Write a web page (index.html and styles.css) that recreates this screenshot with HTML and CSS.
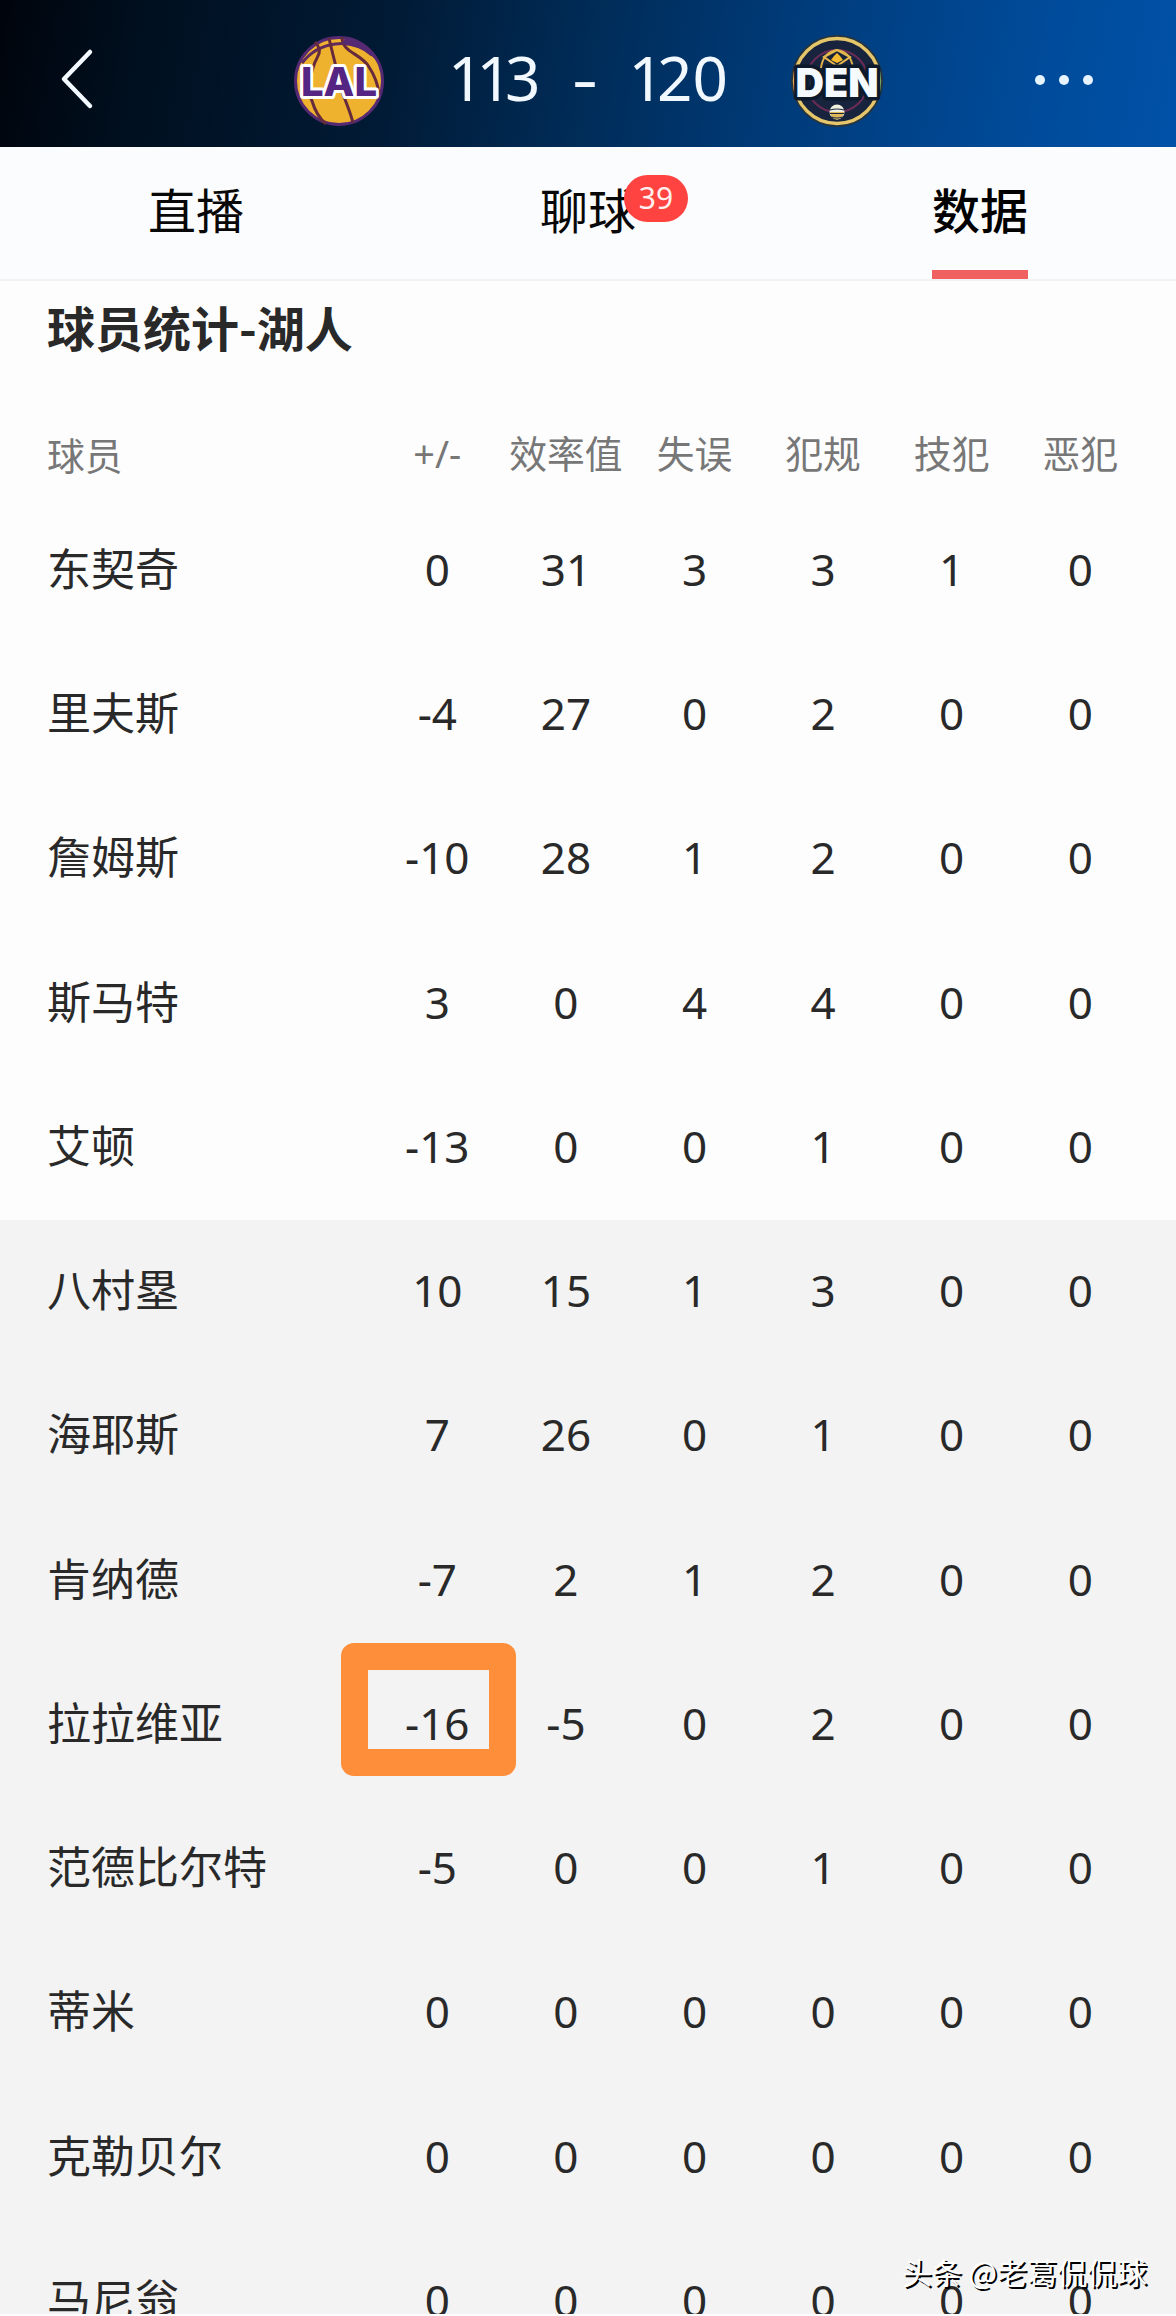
FILE: index.html
```html
<!DOCTYPE html>
<html lang="zh-CN">

<head>
    <meta charset="UTF-8">
    <meta name="viewport" content="width=device-width, initial-scale=1.0">
    <title>湖人 113 - 120 掘金</title>
    <link rel="stylesheet" href="styles.css">
</head>

<body>

    <header class="top-bar">
        <svg class="back" viewBox="0 0 40 64">
            <path d="M33 6 L7 33 L33 60" />
        </svg>

        <svg class="team-logo" viewBox="0 0 100 100">
            <circle cx="50" cy="50" r="43.5" fill="#efb22f" stroke="#552a72" stroke-width="3" />
            <g fill="none" stroke="#652b3c" stroke-width="3">
                <path d="M13 32 C30 10 62 6 83 24" stroke="#5f2b5e" />
                <path d="M26 11 C31 16 32 21 28 27 C22 38 18 60 23 70 C26 80 31 88 37 93" />
                <path d="M40 7 C44 25 50 47 54 63 C58 74 62 83 64 92" />
                <path d="M53 6 C53 22 72 22 80 36 C86 45 89 54 90 63" />
            </g>
            <path d="M56 7 C72 8 86 19 92 36 C83 22 70 15 53 13 Z" fill="#552a72" />
            <text class="logo-text lal" x="50" y="64.500" textLength="76" lengthAdjust="spacingAndGlyphs">LAL</text>
        </svg>

        <div class="score">
            <span><i>1</i><i>1</i>3</span>
            <span class="dash">-</span>
            <span><i>1</i>20</span>
        </div>

        <svg class="team-logo" viewBox="0 0 100 100">
            <circle cx="50" cy="50" r="46" fill="#26343d" />
            <circle cx="50" cy="50" r="42.5" fill="#18243d" stroke="#e6c66b" stroke-width="3.4" />
            <circle cx="50" cy="50" r="31" fill="none" stroke="#6a2c56" stroke-width="2" />
            <path d="M34 37 Q36 21 50 19 Q64 21 66 37" fill="#18243d" stroke="#d9ad4c" stroke-width="2" />
            <path d="M37 26 L50 19 L63 26 L50 35 Z" fill="#17233a" stroke="#e4b74f" stroke-width="2" />
            <path d="M44 29 L47 25 L50 22 L53 25 L56 29 L50 32 Z" fill="#f7b92f" />
            <circle cx="50" cy="81" r="7.5" fill="#f2f0df" />
            <path d="M43 81 H57 Q56 88 50 88.500 Q44 88 43 81Z" fill="#dfb75a" />
            <path d="M43 79 Q50 77 57 79 M43 82.500 H57 M44 86 Q50 88 56 86" fill="none" stroke="#1b2843" stroke-width="1.2" />
            <text class="logo-text den" x="50" y="66" textLength="83" lengthAdjust="spacingAndGlyphs">DEN</text>
        </svg>

        <svg class="more" viewBox="0 0 60 12">
            <circle cx="6" cy="6" r="5" />
            <circle cx="30" cy="6" r="5" />
            <circle cx="54" cy="6" r="5" />
        </svg>
    </header>

    <nav class="tabs">
        <a class="tab"><span>直播</span></a>
        <a class="tab"><span>聊球<b class="badge">39</b></span></a>
        <a class="tab active"><span>数据</span></a>
    </nav>

    <main class="stats">
        <h1>球员统计-湖人</h1>

        <div class="row head">
            <span>球员</span><span>+/-</span><span>效率值</span><span>失误</span><span>犯规</span><span>技犯</span><span>恶犯</span>
        </div>
        <div class="row">
            <span>东契奇</span><span>0</span><span>31</span><span>3</span><span>3</span><span>1</span><span>0</span>
        </div>
        <div class="row">
            <span>里夫斯</span><span>-4</span><span>27</span><span>0</span><span>2</span><span>0</span><span>0</span>
        </div>
        <div class="row">
            <span>詹姆斯</span><span>-10</span><span>28</span><span>1</span><span>2</span><span>0</span><span>0</span>
        </div>
        <div class="row">
            <span>斯马特</span><span>3</span><span>0</span><span>4</span><span>4</span><span>0</span><span>0</span>
        </div>
        <div class="row">
            <span>艾顿</span><span>-13</span><span>0</span><span>0</span><span>1</span><span>0</span><span>0</span>
        </div>

        <!-- bench players -->
        <div class="bench">
            <div class="row">
                <span>八村塁</span><span>10</span><span>15</span><span>1</span><span>3</span><span>0</span><span>0</span>
            </div>
            <div class="row">
                <span>海耶斯</span><span>7</span><span>26</span><span>0</span><span>1</span><span>0</span><span>0</span>
            </div>
            <div class="row">
                <span>肯纳德</span><span>-7</span><span>2</span><span>1</span><span>2</span><span>0</span><span>0</span>
            </div>
            <div class="row">
                <span>拉拉维亚</span><span class="marked">-16</span><span>-5</span><span>0</span><span>2</span><span>0</span><span>0</span>
            </div>
            <div class="row">
                <span>范德比尔特</span><span>-5</span><span>0</span><span>0</span><span>1</span><span>0</span><span>0</span>
            </div>
            <div class="row">
                <span>蒂米</span><span>0</span><span>0</span><span>0</span><span>0</span><span>0</span><span>0</span>
            </div>
            <div class="row">
                <span>克勒贝尔</span><span>0</span><span>0</span><span>0</span><span>0</span><span>0</span><span>0</span>
            </div>
            <div class="row">
                <span>马尼翁</span><span>0</span><span>0</span><span>0</span><span>0</span><span>0</span><span>0</span>
            </div>
        </div>
    </main>

    <div class="watermark">头条 @老葛侃侃球</div>
</body>

</html>
```
FILE: styles.css
```css
*,
*::after {
    margin: 0;
    padding: 0;
    box-sizing: border-box;
}

body {
    position: relative;
    width: 1176px;
    height: 2316px;
    overflow: hidden;
    display: flex;
    flex-direction: column;
    background: #fdfdfd;
    color: #292929;
    font-family: 'Noto Sans', 'Noto Sans CJK SC', sans-serif;
}

/* Score header */
.top-bar {
    flex: none;
    height: 147px;
    display: grid;
    grid-template-columns: 289px 100px 1fr 100px 289px;
    align-items: center;
    background: linear-gradient(100deg, #00040c 0%, #001020 13%, #011a35 33%, #002c58 50%, #003c7c 68%, #004a98 86%, #0051a8 100%);
}

.back {
    width: 40px;
    height: 64px;
    margin: 9px 0 0 57px;
    fill: none;
    stroke: #f4faff;
    stroke-width: 4.5;
    stroke-linecap: round;
    stroke-linejoin: round;
}

.team-logo {
    width: 100px;
    height: 100px;
    margin-top: 15px;
}

.logo-text {
    font-family: Inter, sans-serif;
    font-weight: 900;
    font-size: 40px;
    text-anchor: middle;
    paint-order: stroke;
    stroke-linejoin: round;
}

.lal {
    font-weight: 800;
    fill: #552583;
    stroke: #fff;
    stroke-width: 6;
}

.den {
    fill: #f5faff;
    stroke: #0c1a2b;
    stroke-width: 7;
}

.score {
    display: flex;
    justify-content: center;
    align-items: center;
    gap: 32px;
    margin-top: 6px;
    color: #f1f8ff;
    font-size: 62px;
    line-height: 80px;
}

.score i {
    font-style: normal;
    letter-spacing: -7px;
}

.dash {
    width: 24px;
    text-align: center;
    transform: scaleX(1.3);
}

.more {
    width: 60px;
    height: 12px;
    margin: 13px 0 0 147px;
    fill: #e6f4ff;
}

/* Tabs */
.tabs {
    flex: none;
    height: 134px;
    display: grid;
    grid-template-columns: repeat(3, 1fr);
    justify-items: center;
    background: #fbfcfd;
    border-bottom: 2px solid #f0f2f3;
}

.tab {
    height: 132px;
    font-family: 'Noto Sans CJK SC', sans-serif;
    font-size: 48px;
    line-height: 122px;
    font-weight: 400;
    color: #080808;
}

.tab span {
    position: relative;
    display: block;
}

.tab.active {
    font-weight: 500;
    color: #000;
    border-bottom: 9px solid #f16061;
}

.badge {
    position: absolute;
    left: 84px;
    top: 28px;
    width: 64px;
    height: 47px;
    border-radius: 24px;
    background: #ff4340;
    color: #fff0ee;
    font-family: 'Noto Sans', sans-serif;
    font-size: 30px;
    font-weight: 400;
    line-height: 45px;
    text-align: center;
}

/* Player table */
.stats {
    flex: none;
}

.stats h1 {
    height: 118px;
    padding-left: 47px;
    font-family: 'Noto Sans CJK SC', sans-serif;
    font-size: 48px;
    font-weight: 700;
    line-height: 91px;
}

.row {
    display: grid;
    grid-template-columns: 326px repeat(6, 128.6px);
    height: 144.25px;
    padding-left: 47px;
    font-size: 44px;
    line-height: 140px;
}

.row span {
    text-align: center;
    white-space: nowrap;
}

.row span:first-child {
    text-align: left;
    font-family: 'Noto Sans CJK SC', sans-serif;
    line-height: 136px;
}

.row.head {
    height: 99.75px;
    font-size: 37.8px;
    color: #777;
}

.row.head span {
    line-height: 110px;
}

.bench {
    background: #f3f3f3;
    height: 1094px;
    overflow: hidden;
}

/* orange frame around one value */
.marked {
    position: relative;
}

.marked::after {
    content: '';
    position: absolute;
    left: -32px;
    top: -10px;
    width: 175px;
    height: 133px;
    border: 27px solid #ff8e3a;
    border-radius: 13px;
}

.watermark {
    position: absolute;
    right: 29px;
    bottom: 23px;
    font-family: 'Noto Sans CJK SC', sans-serif;
    font-size: 30px;
    line-height: 44px;
    color: #fff;
    text-shadow: 2px 2px 0 #000;
}
```
